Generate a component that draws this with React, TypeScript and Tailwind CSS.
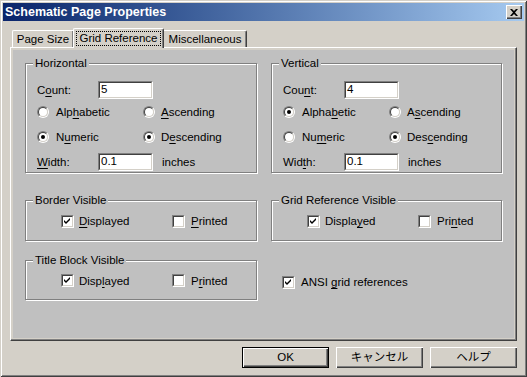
import React from "react";

const F = { fontFamily: '"Liberation Sans", "Noto Sans CJK JP", Arial, sans-serif' };

function U({ children }: { children: React.ReactNode }) {
  return <span className="underline underline-offset-[2px]">{children}</span>;
}

function Radio({ checked }: { checked?: boolean }) {
  return (
    <div className="w-[12px] h-[12px] rounded-full border border-t-[#808080] border-l-[#808080] border-b-white border-r-white shrink-0">
      <div className="w-full h-full rounded-full border border-t-[#404040] border-l-[#404040] border-b-[#d4d0c8] border-r-[#d4d0c8] bg-white flex items-center justify-center">
        {checked && <div className="w-[4px] h-[4px] rounded-full bg-black" />}
      </div>
    </div>
  );
}

function Check({ checked }: { checked?: boolean }) {
  return (
    <div className="w-[13px] h-[13px] border border-t-[#808080] border-l-[#808080] border-b-white border-r-white shrink-0">
      <div className="w-full h-full border border-t-[#404040] border-l-[#404040] border-b-[#d4d0c8] border-r-[#d4d0c8] bg-white flex items-center justify-center">
        {checked && (
          <svg width="7" height="7" viewBox="0 0 7 7">
            <path d="M0 2 L2 4 L6 0 L6 2 L2 6 L0 4 Z" fill="#000" />
          </svg>
        )}
      </div>
    </div>
  );
}

function Input({ value }: { value: string }) {
  return (
    <div className="w-[55px] h-[18px] border border-t-[#808080] border-l-[#808080] border-b-white border-r-white">
      <div className="w-full h-full border border-t-[#404040] border-l-[#404040] border-b-[#d4d0c8] border-r-[#d4d0c8] bg-white flex items-center pl-[1px] text-[11.5px] leading-none">
        {value}
      </div>
    </div>
  );
}

function Group({
  title,
  className,
  children,
}: {
  title: string;
  className: string;
  children: React.ReactNode;
}) {
  return (
    <div
      className={
        "relative border border-[#808080] shadow-[inset_1px_1px_0_#fff,1px_1px_0_#fff] " + className
      }
    >
      <span className="absolute left-[7px] -top-[8px] px-[2px] bg-[#c0c0c0] text-[11.5px] leading-[14px] whitespace-nowrap">
        {title}
      </span>
      {children}
    </div>
  );
}

function Axis({
  title,
  count,
  countLbl,
  a,
  b,
  c,
  d,
  w,
  alpha,
}: {
  title: string;
  count: string;
  countLbl: React.ReactNode;
  a: React.ReactNode;
  b: React.ReactNode;
  c: React.ReactNode;
  d: React.ReactNode;
  w: React.ReactNode;
  alpha: boolean;
}) {
  return (
    <Group title={title} className="w-full h-[110px]">
      <div className="flex flex-col pt-[17px] pl-[11px] text-[11.5px] leading-[14px] whitespace-nowrap">
        <div className="flex items-center h-[18px]">
          <span className="w-[61px]">{countLbl}</span>
          <Input value={count} />
        </div>
        <div className="flex items-center h-[16px] mt-[5px]">
          <div className="flex items-center w-[106px] gap-[7px]">
            <Radio checked={alpha} />
            <span>{a}</span>
          </div>
          <div className="flex items-center gap-[6px]">
            <Radio />
            <span>{b}</span>
          </div>
        </div>
        <div className="flex items-center h-[16px] mt-[9px]">
          <div className="flex items-center w-[106px] gap-[7px]">
            <Radio checked={!alpha} />
            <span>{c}</span>
          </div>
          <div className="flex items-center gap-[6px]">
            <Radio checked />
            <span>{d}</span>
          </div>
        </div>
        <div className="flex items-center h-[18px] mt-[8px]">
          <span className="w-[61px]">{w}</span>
          <Input value="0.1" />
          <span className="ml-[9px]">inches</span>
        </div>
      </div>
    </Group>
  );
}

function Vis({ title, disp, prn, className }: { title: string; disp: React.ReactNode; prn: React.ReactNode; className: string }) {
  return (
    <Group title={title} className={"w-full " + className}>
      <div className="flex items-center h-full pl-[35px] text-[11.5px] leading-[14px] pt-[1px] whitespace-nowrap">
        <div className="flex items-center gap-[5px] w-[111px]">
          <Check checked />
          <span>{disp}</span>
        </div>
        <div className="flex items-center gap-[6px]">
          <Check />
          <span>{prn}</span>
        </div>
      </div>
    </Group>
  );
}

function Btn({ children, def }: { children: React.ReactNode; def?: boolean }) {
  return (
    <div className={"w-[87px] h-[21px] " + (def ? "border border-black" : "")}>
      <div className="w-full h-full bg-[#d4d0c8] shadow-[inset_1px_1px_0_#fff,inset_-1px_-1px_0_#404040,inset_-2px_-2px_0_#808080] flex items-center justify-center text-[11.5px] leading-none">
        {children}
      </div>
    </div>
  );
}

export default function App() {
  return (
    <div
      style={F}
      className="w-[527px] h-[377px] bg-[#d4d0c8] text-black flex flex-col shadow-[inset_1px_1px_0_#d4d0c8,inset_-1px_-1px_0_#404040,inset_2px_2px_0_#fff,inset_-2px_-2px_0_#808080] p-[3px] overflow-hidden"
    >
      {/* Title bar */}
      <div className="h-[18px] bg-gradient-to-r from-[#0a246a] to-[#a6caf0] flex items-center justify-between pl-[2px] pr-[2px]">
        <span className="text-white font-bold text-[12.5px] leading-none whitespace-nowrap">Schematic Page Properties</span>
        <div className="w-[16px] h-[14px] bg-[#d4d0c8] shadow-[inset_1px_1px_0_#fff,inset_-1px_-1px_0_#404040,inset_-2px_-2px_0_#808080] flex items-center justify-center">
          <svg width="8" height="7" viewBox="0 0 8 7">
            <path d="M0 0 H2 L4 2 L6 0 H8 L5 3.5 L8 7 H6 L4 5 L2 7 H0 L3 3.5 Z" fill="#000" />
          </svg>
        </div>
      </div>

      {/* Tabs */}
      <div className="flex items-end h-[19px] mt-[7px] ml-[9px] text-[11.5px] leading-[14px] relative z-10 whitespace-nowrap">
        <div className="w-[61px] h-[17px] bg-[#d4d0c8] border-l border-t border-white rounded-tl-[2px] flex items-center justify-center shadow-[inset_-1px_0_0_#808080]">
          Page Size
        </div>
        <div className="w-[91px] h-[20px] -mb-[1px] bg-[#d4d0c8] border-l border-t border-white border-r border-r-[#404040] rounded-t-[2px] shadow-[inset_-1px_0_0_#808080] flex items-start justify-center pt-[2px]">
          <span className="border border-dotted border-black px-[3px] leading-[13px]">Grid Reference</span>
        </div>
        <div className="w-[83px] h-[17px] bg-[#d4d0c8] border-t border-white border-r border-r-[#404040] rounded-tr-[2px] flex items-center justify-center shadow-[inset_-1px_0_0_#808080]">
          Miscellaneous
        </div>
      </div>

      {/* Panel */}
      <div className="ml-[7px] w-[507px] h-[294px] border border-t-white border-l-white border-r-[#404040] border-b-[#404040] shadow-[inset_-1px_-1px_0_#808080] p-[2px]">
        <div className="w-full h-full bg-[#c0c0c0] pl-[12px] pt-[13px]">
          <div className="grid grid-cols-[232px_231px] gap-x-[14px]">
            <Axis
              title="Horizontal"
              count="5"
              countLbl={<>C<U>o</U>unt:</>}
              a={<>Alp<U>h</U>abetic</>}
              b={<><U>A</U>scending</>}
              c={<>N<U>u</U>meric</>}
              d={<>D<U>e</U>scending</>}
              w={<><U>W</U>idth:</>}
              alpha={false}
            />
            <Axis
              title="Vertical"
              count="4"
              countLbl={<>Cou<U>n</U>t:</>}
              a={<>Alpha<U>b</U>etic</>}
              b={<>A<U>s</U>cending</>}
              c={<>Nu<U>m</U>eric</>}
              d={<>Des<U>c</U>ending</>}
              w={<>Wid<U>t</U>h:</>}
              alpha={true}
            />
            <div className="mt-[27px]">
              <Vis title="Border Visible" className="h-[41px]" disp={<><U>D</U>isplayed</>} prn={<><U>P</U>rinted</>} />
            </div>
            <div className="mt-[27px]">
              <Vis title="Grid Reference Visible" className="h-[41px]" disp={<>Displa<U>y</U>ed</>} prn={<>Pri<U>n</U>ted</>} />
            </div>
            <div className="mt-[19px]">
              <Vis title="Title Block Visible" className="h-[40px]" disp={<>Disp<U>l</U>ayed</>} prn={<>P<U>r</U>inted</>} />
            </div>
            <div className="mt-[19px] flex items-center h-[40px] pl-[11px] gap-[6px] text-[11.5px] leading-[14px] pt-[4px] whitespace-nowrap">
              <Check checked />
              <span>ANSI <U>g</U>rid references</span>
            </div>
          </div>
        </div>
      </div>

      {/* Buttons */}
      <div className="flex justify-end gap-[7px] mt-[6px] mr-[7px]">
        <Btn def>OK</Btn>
        <Btn>キャンセル</Btn>
        <Btn>ヘルプ</Btn>
      </div>
    </div>
  );
}
